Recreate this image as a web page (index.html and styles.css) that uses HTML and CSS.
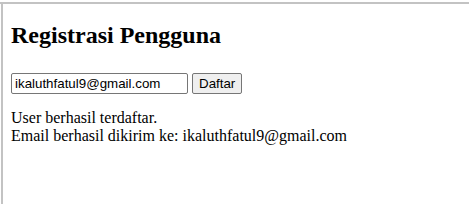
FILE: index.html
```html
<!DOCTYPE html>
<html lang="id">
<head>
<meta charset="utf-8">
<title>Registrasi Pengguna</title>
<link rel="stylesheet" href="styles.css">
</head>
<body>
<div class="frame">
  <div class="topbar"></div>
  <div class="content">
    <h1 class="title">Registrasi Pengguna</h1>
    <form class="form">
      <input class="email" type="email" value="ikaluthfatul9@gmail.com">
      <button class="btn" type="button">Daftar</button>
    </form>
    <div class="result">
      <div>User berhasil terdaftar.</div>
      <div>Email berhasil dikirim ke: ikaluthfatul9@gmail.com</div>
    </div>
  </div>
</div>
</body>
</html>
```

FILE: styles.css
```css
html, body {
  margin: 0;
  padding: 0;
  background: #ffffff;
}
body {
  font-family: "Liberation Serif", "Times New Roman", serif;
  font-size: 16px;
  color: #000;
}
.frame {
  margin-left: 1px;
  border-left: 2px solid #c3c3c3;
  min-height: 100vh;
  box-sizing: border-box;
}
.topbar {
  height: 2px;
  margin-top: 2px;
  margin-left: -3px;
  background: #c3c3c3;
}
.content {
  padding: 0 8px;
}
.title {
  font-size: 24px;
  font-weight: bold;
  margin: 18px 0 0;
  line-height: normal;
}
.form {
  margin: 24px 0 0;
  display: flex;
  gap: 4px;
  align-items: center;
}
.email {
  box-sizing: border-box;
  width: 177px;
  height: 21px;
  padding: 1px 2px 1px 3px;
  border: 1px solid #767676;
  border-radius: 2px;
  font-family: "Liberation Sans", Arial, sans-serif;
  font-size: 13.333px;
  color: #000;
  margin: 0;
}
.btn {
  box-sizing: border-box;
  height: 21px;
  padding: 1px 6px;
  border: 1px solid #767676;
  border-radius: 2px;
  background: #efefef;
  font-family: "Liberation Sans", Arial, sans-serif;
  font-size: 13.333px;
  color: #000;
  margin: 0;
}
.result {
  margin-top: 15px;
}
```
